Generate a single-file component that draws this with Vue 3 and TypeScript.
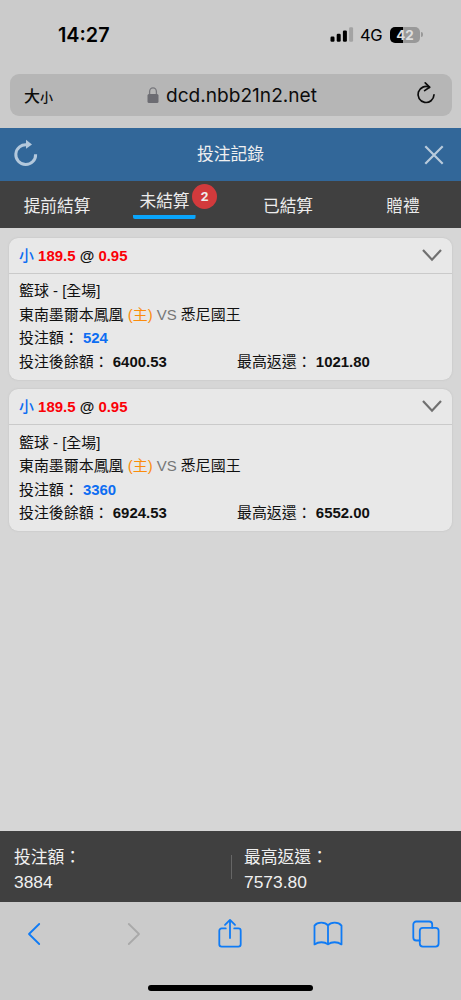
<script setup lang="ts">
interface Bet {
  id: number
  pick: string
  line: string
  odds: string
  market: string
  home: string
  away: string
  stake: string
  balance: string
  payout: string
}

interface Tab {
  label: string
  active?: boolean
  count?: number
}

const tabs: Tab[] = [
  { label: '提前結算' },
  { label: '未結算', active: true, count: 2 },
  { label: '已結算' },
  { label: '贈禮' },
]

const bets: Bet[] = [
  {
    id: 1, pick: '小', line: '189.5', odds: '0.95', market: '籃球 - [全場]',
    home: '東南墨爾本鳳凰', away: '悉尼國王', stake: '524', balance: '6400.53', payout: '1021.80',
  },
  {
    id: 2, pick: '小', line: '189.5', odds: '0.95', market: '籃球 - [全場]',
    home: '東南墨爾本鳳凰', away: '悉尼國王', stake: '3360', balance: '6924.53', payout: '6552.00',
  },
]
</script>

<template>
  <div class="screen">
    <div class="status">
      <span class="time">14:27</span>
      <div class="indicators">
        <svg class="signal" width="24" height="16" viewBox="0 0 24 16">
          <rect x="0.5" y="9.5" width="4" height="5.2" rx="1.2" />
          <rect x="6.7" y="6.7" width="4" height="8" rx="1.2" />
          <rect x="12.9" y="3.6" width="4" height="11.1" rx="1.2" />
          <rect x="19.1" y="0.3" width="4" height="14.4" rx="1.2" fill="#a3a3a3" />
        </svg>
        <span class="network">4G</span>
        <div class="battery"><span>42</span></div>
        <i class="cap"></i>
      </div>
    </div>

    <div class="address">
      <span class="aa">大<small>小</small></span>
      <div class="host">
        <svg width="12" height="17" viewBox="0 0 12 17">
          <path d="M2.6 8V4.7a3.4 3.9 0 0 1 6.8 0V8" fill="none" stroke="#77777c" stroke-width="1.3" />
          <rect x="0.5" y="7" width="11" height="9" rx="1.5" fill="#6c6c72" />
        </svg>
        <span>dcd.nbb21n2.net</span>
      </div>
      <svg class="reload" width="20" height="24" viewBox="0 0 20 24" fill="none" stroke="#0c0c0c" stroke-width="1.7" stroke-linecap="round" stroke-linejoin="round">
        <path d="M18 13.8A8 8 0 1 1 13.5 6.3" />
        <path d="M9.2 1.9L13.6 6.2L8.6 9.6" />
      </svg>
    </div>

    <header class="title-bar">
      <svg class="refresh" width="26" height="28" viewBox="0 0 26 28">
        <path d="M22.6 15.2A9.9 9.9 0 1 1 14.2 5.9" fill="none" stroke="#b3c8dc" stroke-width="3" />
        <path d="M13 0.8L19 5.4L13 9.8Z" fill="#b3c8dc" />
      </svg>
      <h1>投注記錄</h1>
      <svg width="20" height="20" viewBox="0 0 20 20">
        <path d="M1.3 1.3L18.7 18.7M18.7 1.3L1.3 18.7" stroke="#b9cbdc" stroke-width="2.2" />
      </svg>
    </header>

    <nav class="tabs">
      <div v-for="tab in tabs" :key="tab.label" class="tab" :class="{ active: tab.active }">
        <span class="label">{{ tab.label }}</span>
        <b v-if="tab.count" class="badge">{{ tab.count }}</b>
      </div>
    </nav>

    <main class="list">
      <article v-for="bet in bets" :key="bet.id" class="card">
        <div class="card-head">
          <div class="pick">
            <span class="blue side">{{ bet.pick }}</span>
            {{ ' ' }}<b class="red">{{ bet.line }}</b> <b class="at">@</b> <b class="red">{{ bet.odds }}</b>
          </div>
          <svg width="20" height="13" viewBox="0 0 20 13">
            <path d="M1 1L10 10.7L19 1" fill="none" stroke="#707070" stroke-width="2.2" />
          </svg>
        </div>
        <div class="card-body">
          <div>{{ bet.market }}</div>
          <div>{{ bet.home }} <span class="orange">(主)</span> <span class="vs">VS</span> {{ bet.away }}</div>
          <div>投注額： <b class="blue">{{ bet.stake }}</b></div>
          <div class="pair">
            <span>投注後餘額： <b>{{ bet.balance }}</b></span>
            <span>最高返還： <b>{{ bet.payout }}</b></span>
          </div>
        </div>
      </article>
    </main>

    <footer class="totals">
      <div class="total"><span>投注額：</span><span class="num">3884</span></div>
      <i class="rule"></i>
      <div class="total"><span>最高返還：</span><span class="num">7573.80</span></div>
    </footer>

    <div class="toolbar">
      <div class="tools">
        <svg width="14" height="24" viewBox="0 0 14 24"><path d="M12.2 2L2 12L12.2 22" /></svg>
        <svg class="off" width="14" height="24" viewBox="0 0 14 24"><path d="M1.8 2L12 12L1.8 22" /></svg>
        <svg width="26" height="32" viewBox="0 0 26 32">
          <path d="M8.8 10.4H4.6A2.3 2.3 0 0 0 2.3 12.7V26.3A2.3 2.3 0 0 0 4.6 28.6H21.4A2.3 2.3 0 0 0 23.7 26.3V12.7A2.3 2.3 0 0 0 21.4 10.4H17.2" />
          <path d="M13 20V2M8 6.8L13 1.9L18 6.8" />
        </svg>
        <svg width="30" height="26" viewBox="0 0 30 26">
          <path d="M15 4.6C12.2 0.7 4.5 0.7 1.5 4.6V23.4C5.5 20.5 11.5 20.5 15 23.4C18.5 20.5 24.5 20.5 28.5 23.4V4.6C25.5 0.7 17.8 0.7 15 4.6V23.2" />
        </svg>
        <svg width="28" height="28" viewBox="0 0 28 28">
          <path d="M7.8 20.5H4.3A3 3 0 0 1 1.3 17.5V4.5A3 3 0 0 1 4.3 1.5H17.2A3 3 0 0 1 20.2 4.5V7.8" />
          <rect x="7.8" y="7.8" width="18.8" height="18.8" rx="3" />
        </svg>
      </div>
      <i class="home"></i>
    </div>
  </div>
</template>

<style>
body {
  margin: 0;
}
</style>

<style scoped>
.screen {
  width: 461px;
  height: 1000px;
  overflow: hidden;
  display: flex;
  flex-direction: column;
  background: #cbcbcb;
  font-family: "Liberation Sans", "Noto Sans CJK TC", sans-serif;
}
.screen * {
  box-sizing: border-box;
}
svg {
  display: block;
  flex: none;
}
.status {
  height: 74px;
  flex: none;
  display: flex;
  justify-content: space-between;
  padding: 22px 38px 0 58px;
  font-family: Inter, sans-serif;
}
.time {
  font-size: 19.8px;
  font-weight: 600;
  line-height: 26px;
}
.indicators {
  display: flex;
  align-items: center;
  height: 25px;
}
.signal {
  margin-right: 6px;
}
.network {
  width: 23px;
  font-size: 16.5px;
  line-height: 25px;
  letter-spacing: -0.3px;
  margin: 1px 7px 0 0;
}
.battery {
  width: 30px;
  height: 16px;
  border-radius: 5px;
  background: linear-gradient(90deg, #000 42%, #999 42%);
  color: #dedede;
  font-size: 13.5px;
  font-weight: 700;
  line-height: 16px;
  text-align: center;
}
.cap {
  width: 2px;
  height: 5px;
  margin-left: 1px;
  border-radius: 0 2px 2px 0;
  background: #999;
}
.address {
  height: 42px;
  flex: none;
  margin: 0 9px 12px 10px;
  padding: 0 16px 0 14px;
  border-radius: 9px;
  background: #b6b6b6;
  display: flex;
  align-items: center;
  color: #0c0c0c;
}
.aa {
  width: 123px;
  font-size: 16px;
  font-weight: 500;
}
.aa small {
  font-size: 13px;
}
.host {
  display: flex;
  align-items: center;
  gap: 7px;
  font-family: Inter, sans-serif;
  font-size: 19.1px;
  white-space: nowrap;
}
.reload {
  margin: -4px 0 0 auto;
}
.title-bar {
  height: 53px;
  flex: none;
  padding: 0 17px 0 13px;
  background: #326799;
  display: flex;
  align-items: center;
  justify-content: space-between;
}
.refresh {
  margin-top: -3px;
}
.title-bar h1 {
  margin: -3px 2px 0 0;
  font-size: 16.8px;
  font-weight: 400;
  color: #f0f0f0;
}
.tabs {
  height: 47px;
  flex: none;
  display: grid;
  grid-template-columns: 114px 101px 146px 84px;
  background: #404040;
  color: #ececec;
  font-size: 16.7px;
}
.tab {
  position: relative;
  display: flex;
  justify-content: center;
  line-height: 51px;
}
.active .label {
  height: 38px;
  padding: 0 6px;
  line-height: 42px;
  background: linear-gradient(#0aa5fb, #0aa5fb) bottom / 100% 4px no-repeat;
  border-radius: 2px;
}
.badge {
  position: absolute;
  left: 78px;
  top: 3px;
  width: 25px;
  height: 25px;
  border-radius: 50%;
  background: #d23a3c;
  color: #eee;
  font: 700 13.5px/25px Roboto, sans-serif;
  text-align: center;
}
.list {
  flex: 1;
  padding: 9.5px 9px 0;
  background: #d6d6d6;
  display: flex;
  flex-direction: column;
  gap: 9.5px;
}
.card {
  height: 142px;
  border-radius: 9px;
  background: #e8e8e8;
  box-shadow: 0 0 2px #bdbdbd;
  font-size: 14.95px;
  color: #101010;
}
.card-head {
  height: 36px;
  padding: 0 10px;
  border-bottom: 1px solid #cacaca;
  display: flex;
  align-items: center;
  justify-content: space-between;
}
.pick {
  margin-top: -2px;
}
.side {
  font-weight: 500;
}
.card-body {
  padding: 5.5px 10px 0;
  line-height: 23.5px;
  white-space: nowrap;
}
.pair {
  display: grid;
  grid-template-columns: 218px 1fr;
}
.blue {
  color: #0d6df2;
}
.red {
  color: #fb0007;
}
.orange {
  color: #fb8c0c;
}
.vs {
  color: #777;
}
.totals {
  height: 71px;
  flex: none;
  padding: 6px 0 0 14px;
  background: #404040;
  color: #f0f0f0;
  display: flex;
  align-items: center;
}
.total {
  width: 217px;
  flex: none;
  display: flex;
  flex-direction: column;
  font-size: 16.8px;
  line-height: 24px;
}
.total .num {
  font-size: 17.4px;
}
.rule {
  width: 1px;
  height: 24px;
  flex: none;
  margin: -6px 12px 0 0;
  background: #666;
}
.toolbar {
  height: 98px;
  flex: none;
  display: flex;
  flex-direction: column;
  align-items: center;
}
.tools {
  width: 490px;
  flex: none;
  height: 64px;
  margin-right: 1px;
  display: grid;
  grid-template-columns: repeat(5, 98px);
  align-items: center;
  justify-items: center;
}
.tools svg {
  fill: none;
  stroke: #0f7bf5;
  stroke-width: 1.8;
  stroke-linecap: round;
  stroke-linejoin: round;
}
.tools .off {
  margin-left: 4px;
  stroke: #a9a9a9;
}
.home {
  width: 165px;
  height: 6px;
  margin-top: 19px;
  border-radius: 3px;
  background: #000;
}
</style>
